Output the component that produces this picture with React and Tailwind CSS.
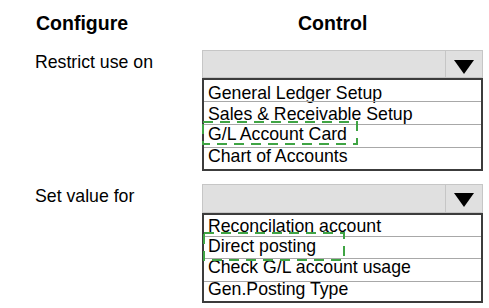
import React from "react";

// 드롭다운 목록 데이터 (행 높이, 글자 위치)
const restrictItems = [
  { label: "General Ledger Setup", row: "h-[21px]", pad: "pt-[6px]" },
  { label: "Sales & Receivable Setup", row: "h-[23px] border-t", pad: "pt-[5px]" },
  { label: "G/L Account Card", row: "h-[23px] border-t", pad: "pt-[2px]" },
  { label: "Chart of Accounts", row: "h-[22px] border-t", pad: "pt-[1px]" },
];

const setValueItems = [
  { label: "Reconcilation account", row: "h-[21px]", pad: "pt-[4px]" },
  { label: "Direct posting", row: "h-[22px] border-t", pad: "pt-[2px]" },
  { label: "Check G/L account usage", row: "h-[23px] border-t", pad: "pt-[1px]" },
  { label: "Gen.Posting Type", row: "h-[20px] border-t", pad: "pt-0" },
];

const SelectBox = ({ height, arrowPad }) => (
  <div className={`flex w-[281px] ${height} border border-[#c6c6c6] bg-[#e0e0e0]`}>
    <div className="flex-1" />
    <div className={`flex w-[37px] justify-center border-l border-[#c6c6c6] ${arrowPad}`}>
      <svg width="20" height="14" viewBox="0 0 20 14">
        <polygon points="0,0 20,0 10,14" fill="#000" />
      </svg>
    </div>
  </div>
);

const OptionList = ({ items }) => (
  <div className="flex w-[281px] flex-col border-2 border-[#3c3c3c] bg-white">
    {items.map((item) => (
      <div key={item.label} className={`${item.row} border-[#a8a8a8] pl-[4px]`}>
        <p className={`${item.pad} leading-[14px] whitespace-nowrap`}>{item.label}</p>
      </div>
    ))}
  </div>
);

// 점선 강조 박스
const DashedMark = ({ className, w, h }) => (
  <svg className={`pointer-events-none absolute ${className}`} width={w} height={h}>
    <rect
      x="1"
      y="1"
      width={w - 2}
      height={h - 2}
      fill="none"
      stroke="#3fa444"
      strokeWidth="2"
      strokeDasharray="10 7"
    />
  </svg>
);

const App = () => {
  return (
    <div className="relative h-[308px] w-[489px] overflow-hidden bg-white font-['Liberation_Sans',Arial,sans-serif] text-black">
      <div className="flex flex-col pl-[35px] pt-[11px]">
        {/* 헤더 */}
        <div className="flex text-[19.5px] font-bold leading-[24px]">
          <p className="w-[167px] pl-px">Configure</p>
          <p className="ml-[96px]">Control</p>
        </div>

        {/* Restrict use on */}
        <div className="mt-[15px] flex text-[17.7px]">
          <p className="w-[167px] pt-px leading-[22px]">Restrict use on</p>
          <div className="flex flex-col">
            <SelectBox height="h-[28px]" arrowPad="pt-[9px]" />
            <OptionList items={restrictItems} />
          </div>
        </div>

        {/* Set value for */}
        <div className="mt-[13px] flex text-[17.7px]">
          <p className="w-[167px] pt-px leading-[22px]">Set value for</p>
          <div className="flex flex-col">
            <SelectBox height="h-[29px]" arrowPad="pt-[8px]" />
            <OptionList items={setValueItems} />
          </div>
        </div>
      </div>

      <DashedMark className="left-[202px] top-[121px]" w={156} h={24} />
      <DashedMark className="left-[203px] top-[232px]" w={142} h={29} />
    </div>
  );
};

export default App;
